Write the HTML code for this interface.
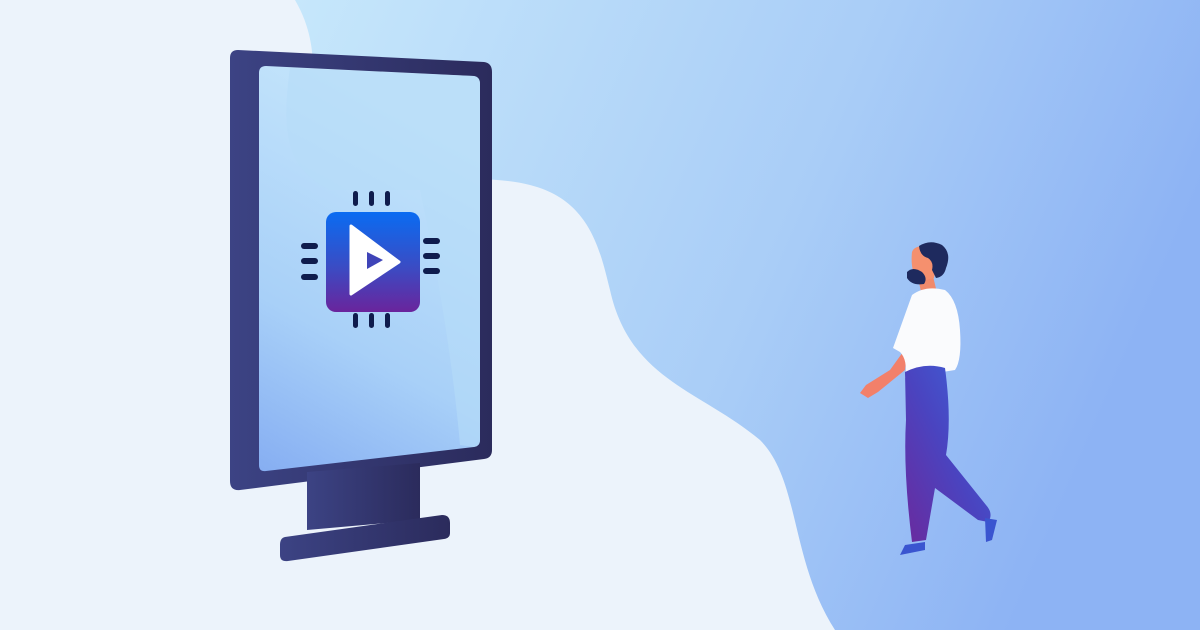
<!DOCTYPE html><html><head><style>html,body{margin:0;padding:0;width:1200px;height:630px;overflow:hidden;background:#ecf3fb}</style></head><body>
<svg width="1200" height="630" viewBox="0 0 1200 630" xmlns="http://www.w3.org/2000/svg">
<defs>
<linearGradient id="bg" x1="0" y1="0" x2="1" y2="0.3"><stop offset="0" stop-color="#c6e7fb"/><stop offset="0.6" stop-color="#a9cdf7"/><stop offset="1" stop-color="#8db3f4"/></linearGradient>
<linearGradient id="frame" x1="0" y1="0" x2="1" y2="0"><stop offset="0" stop-color="#3c4384"/><stop offset="1" stop-color="#2b2b5c"/></linearGradient>
<linearGradient id="scr" x1="0.3" y1="0" x2="0" y2="1"><stop offset="0" stop-color="#c3e4fb"/><stop offset="0.6" stop-color="#a8d0f8"/><stop offset="1" stop-color="#86aef2"/></linearGradient>
<linearGradient id="chip" x1="0" y1="0" x2="0" y2="1"><stop offset="0" stop-color="#0a6cf2"/><stop offset="0.55" stop-color="#3a4cc4"/><stop offset="1" stop-color="#6a249c"/></linearGradient>
<linearGradient id="pants" x1="1" y1="0" x2="0" y2="1"><stop offset="0" stop-color="#3b66dc"/><stop offset="0.5" stop-color="#4a44c0"/><stop offset="1" stop-color="#6a2a9e"/></linearGradient>
</defs>
<path d="M295 0 C330 60 300 110 320 160 C380 190 470 170 530 185 C590 200 600 250 610 290 C630 380 700 390 760 440 C800 480 790 560 835 630 L1200 630 L1200 0 Z" fill="url(#bg)"/>
<path d="M238 50 L484 62 Q492 63 492 72 L492 450 Q492 458 484 459 L240 490 Q230 491 230 481 L230 58 Q230 50 238 50 Z" fill="url(#frame)"/>
<path d="M266 66 L474 76 Q480 77 480 84 L480 440 Q480 446 474 447 L266 471 Q259 472 259 465 L259 73 Q259 66 266 66 Z" fill="url(#scr)"/>
<path d="M290 68 C280 140 290 170 330 190 L420 190 Q450 330 460 445 L474 447 Q480 446 480 440 L480 84 Q480 77 474 76 Z" fill="#b6dcf9" opacity="0.6"/>
<path d="M307 472 L420 463 L420 520 L307 530 Z" fill="url(#frame)"/>
<path d="M285 537 L442 515 Q450 515 450 523 L450 533 Q450 538 444 539 L288 561 Q280 562 280 555 L280 545 Q280 538 285 537 Z" fill="url(#frame)"/>
<rect x="326" y="212" width="94" height="100" rx="10" fill="url(#chip)"/>
<path d="M351 226 L399 262 L351 294 Z" fill="#fff" stroke="#fff" stroke-width="3" stroke-linejoin="round"/>
<path d="M367 252 L383 260 L367 269 Z" fill="#3f44b8"/>
<g fill="#0f1c4d">
<rect x="353" y="191" width="5" height="15" rx="2.5"/><rect x="369" y="191" width="5" height="15" rx="2.5"/><rect x="385" y="191" width="5" height="15" rx="2.5"/>
<rect x="353" y="313" width="5" height="15" rx="2.5"/><rect x="369" y="313" width="5" height="15" rx="2.5"/><rect x="385" y="313" width="5" height="15" rx="2.5"/>
<rect x="301" y="243" width="17" height="6" rx="3"/><rect x="301" y="258" width="17" height="6" rx="3"/><rect x="301" y="274" width="17" height="6" rx="3"/>
<rect x="423" y="238" width="17" height="6" rx="3"/><rect x="423" y="253" width="17" height="6" rx="3"/><rect x="423" y="268" width="17" height="6" rx="3"/>
</g>
<!-- person -->
<path d="M908 345 L890 370 L866 385 L860 393 L868 398 L878 392 L905 370 Z" fill="#f2806a"/>
<path d="M918 278 L933 276 L937 293 L922 296 Z" fill="#f08a6c"/>
<path d="M912 295 Q925 285 945 290 Q958 300 960 330 Q962 360 955 370 L905 378 Q908 360 900 352 L893 348 Z" fill="#fafbfd"/>
<path d="M905 372 Q925 362 945 368 Q952 420 946 455 L986 505 Q994 514 988 522 L978 520 L935 488 L926 540 L912 542 Q903 470 906 420 Z" fill="url(#pants)"/>
<path d="M905 545 L925 542 L925 550 L900 555 Z" fill="#3a55d0"/>
<path d="M985 518 L997 520 L992 540 L986 542 Z" fill="#3a55d0"/>
<path d="M912 252 Q914 246 924 246 Q936 248 937 262 L934 278 L918 282 Q910 270 912 252 Z" fill="#f5906e"/>
<path d="M919 246 Q930 239 942 245 Q952 253 946 268 Q944 277 936 278 L932 270 Q934 262 928 258 Q920 256 919 246 Z" fill="#1e2a5e"/>
<path d="M907 272 Q913 266 922 272 Q928 278 924 284 Q912 286 907 278 Z" fill="#1e2a5e"/>
</svg>
</body></html>
